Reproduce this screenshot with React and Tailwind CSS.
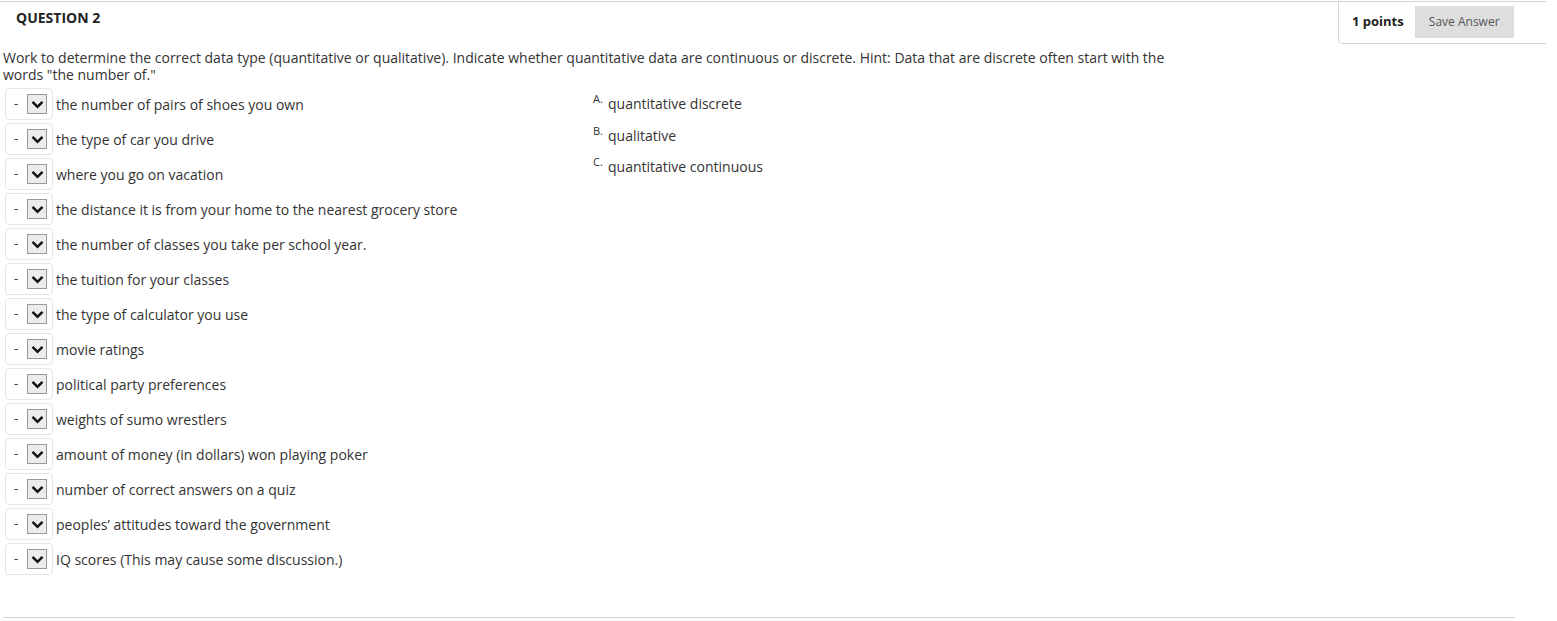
const items = [
  "the number of pairs of shoes you own",
  "the type of car you drive",
  "where you go on vacation",
  "the distance it is from your home to the nearest grocery store",
  "the number of classes you take per school year.",
  "the tuition for your classes",
  "the type of calculator you use",
  "movie ratings",
  "political party preferences",
  "weights of sumo wrestlers",
  "amount of money (in dollars) won playing poker",
  "number of correct answers on a quiz",
  "peoples’ attitudes toward the government",
  "IQ scores (This may cause some discussion.)",
];

const answers = [
  ["A.", "quantitative discrete"],
  ["B.", "qualitative"],
  ["C.", "quantitative continuous"],
];

const Select = () => (
  <div className="w-[48px] h-[32px] shrink-0 border border-[#e6e6e6] rounded-[4px] bg-white flex items-center pl-[8px]">
    <span className="text-[13px] text-[#333] w-[11px]">-</span>
    <span className="ml-[2px] w-[20px] h-[20px] border border-[#9a9a9a] bg-[#ececec] flex items-center justify-center">
      <svg width="13" height="9" viewBox="0 0 13 9">
        <path d="M1.5 1.8 L6.5 6.8 L11.5 1.8" fill="none" stroke="#111" strokeWidth="2.5" />
      </svg>
    </span>
  </div>
);

export default function App() {
  return (
    <div className="w-[1557px] h-[621px] bg-white text-[#333] font-['Open_Sans',sans-serif] relative overflow-hidden">
      <div className="flex justify-between border-t border-[#d4d4d4] mt-px w-[1546px]">
        <div className="pl-[16px] pt-[5px] text-[14px] font-bold text-[#222]">QUESTION 2</div>
        <div className="w-[208px] h-[42px] border-l border-b border-[#d4d4d4] rounded-bl-[5px] flex items-start pt-[4px] pl-[13px]">
          <span className="text-[13px] font-bold text-[#222] mt-[6px]">1 points</span>
          <button className="ml-[11px] w-[99px] h-[32px] bg-[#dedede] text-[12px] text-[#555] pb-[1px]">Save Answer</button>
        </div>
      </div>

      <p className="pl-[3px] mt-[5px] max-w-[1175px] text-[14px] leading-[17px]">
        Work to determine the correct data type (quantitative or qualitative). Indicate whether quantitative data are continuous or discrete. Hint: Data that are discrete often start with the words "the number of."
      </p>

      <div className="flex pl-[5px] mt-[5px]">
        <div className="w-[588px] flex flex-col gap-[3px]">
          {items.map((t) => (
            <div key={t} className="flex items-center h-[32px]">
              <Select />
              <span className="ml-[3px] text-[14px]">{t}</span>
            </div>
          ))}
        </div>
        <div className="flex flex-col gap-[10.5px] pt-[4px]">
          {answers.map(([l, t]) => (
            <div key={l} className="flex items-start">
              <span className="text-[11px] leading-[13px] w-[15px]">{l}</span>
              <span className="text-[14px] leading-[19px] mt-[2px]">{t}</span>
            </div>
          ))}
        </div>
      </div>

      <div className="absolute left-[3px] top-[617px] w-[1512px] border-t border-[#d4d4d4]" />
    </div>
  );
}
